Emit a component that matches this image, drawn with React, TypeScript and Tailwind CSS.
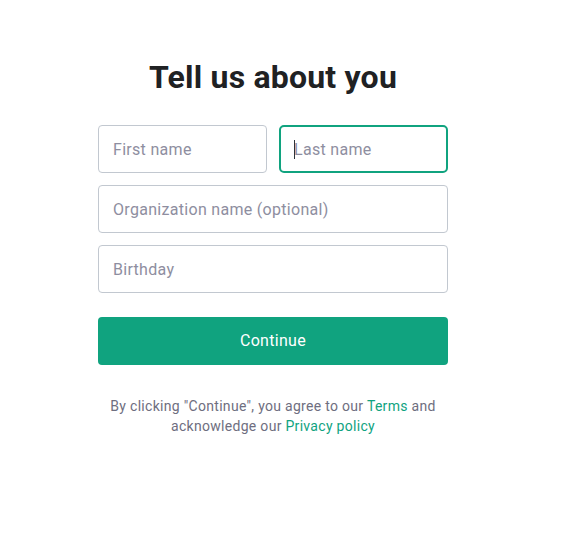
import React from "react";

function Field({ placeholder, focused }: { placeholder: string; focused?: boolean }) {
  return (
    <div className="relative w-full">
      <input
        type="text"
        placeholder={placeholder}
        className={
          focused
            ? "w-full h-12 rounded-[5px] border-2 border-[#10a37f] px-[13px] text-base tracking-[0.3px] text-[#2d333a] placeholder:text-[#8e8ea0] outline-none bg-white"
            : "w-full h-12 rounded-[4px] border border-[#c2c8d0] px-[14px] text-base tracking-[0.3px] text-[#2d333a] placeholder:text-[#8e8ea0] outline-none bg-white"
        }
      />
      {focused && <span className="absolute left-[15px] top-[15px] w-px h-[19px] bg-[#2d333a]" />}
    </div>
  );
}

export default function App() {
  return (
    <div className="min-h-[550px] bg-white" style={{ fontFamily: "Roboto, 'Liberation Sans', sans-serif" }}>
      <div className="w-[350px] ml-[98px] pt-[57px]">
        <h1 className="text-[32px] leading-[40px] font-bold text-[#202123] text-center tracking-[0.2px]">
          Tell us about you
        </h1>
        <div className="mt-[28px] flex flex-col gap-3">
          <div className="flex gap-3">
            <Field placeholder="First name" />
            <Field placeholder="Last name" focused />
          </div>
          <Field placeholder="Organization name (optional)" />
          <Field placeholder="Birthday" />
        </div>
        <button className="mt-6 w-full h-12 rounded-[4px] bg-[#10a37f] text-white text-base tracking-[0.3px]">
          Continue
        </button>
        <p className="mt-[31px] text-sm leading-5 text-[#6e6e80] text-center tracking-[0.3px]">
          By clicking "Continue", you agree to our <span className="text-[#10a37f]">Terms</span> and
          acknowledge our <span className="text-[#10a37f]">Privacy policy</span>
        </p>
      </div>
    </div>
  );
}
